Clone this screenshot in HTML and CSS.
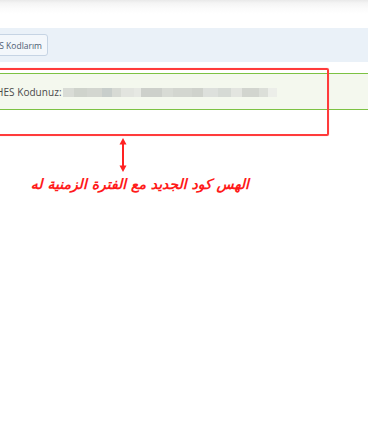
FILE: index.html
```html
<!DOCTYPE html>
<html lang="tr">
<head>
<meta charset="utf-8">
<link rel="stylesheet" href="styles.css">
</head>
<body>
<div class="page">
  <header class="topbar"></header>
  <div class="toolbar">
    <button class="btn">HES Kodlarım</button>
  </div>
  <div class="gap"></div>
  <div class="alert">
    <span class="label">HES Kodunuz:</span>
    <span class="blur">
      <i style="background:#d9dcd6;width:11px"></i><i style="background:#cfd3cc;width:13px"></i><i style="background:#d3d6d0;width:15px"></i><i style="background:#c8cecb;width:10px"></i><i style="background:#d7dad4;width:9px"></i><i style="background:#e2e4df;width:13px"></i><i style="background:#e6e8e3;width:7px"></i><i style="background:#cdd0cb;width:21px"></i><i style="background:#d8dbd5;width:11px"></i><i style="background:#d3d6d0;width:19px"></i><i style="background:#cfd2cc;width:11px"></i><i style="background:#dde0dc;width:15px"></i><i style="background:#d6dad5;width:13px"></i><i style="background:#e3e5e0;width:11px"></i><i style="background:#d2d5cf;width:17px"></i><i style="background:#dcdfd9;width:9px"></i><i style="background:#eceee9;width:9px"></i>
    </span>
  </div>
  <div class="note">
    <p class="note-text">الهس كود الجديد مع الفترة الزمنية له</p>
  </div>
  <div class="highlight"></div>
  <svg class="arrow" width="10" height="36" viewBox="0 0 10 36">
    <path d="M5 3 L5 33" stroke="#f22" stroke-width="2"/>
    <path d="M1.5 7.5 L5 1 L8.5 7.5 Z" fill="#f22"/>
    <path d="M1.5 28.5 L5 35 L8.5 28.5 Z" fill="#f22"/>
  </svg>
</div>
</body>
</html>
```

FILE: styles.css
```css
* { box-sizing: border-box; }
html, body { margin: 0; padding: 0; background: #fff; }
body { width: 368px; height: 445px; overflow: hidden; font-family: "Open Sans", "Noto Sans", sans-serif; }
.page { position: relative; height: 445px; }
.topbar {
  height: 29px;
  background: linear-gradient(#e9e9e9 0px, #f4f4f4 3px, #fbfbfb 8px, #fff 14px);
  border-bottom: 1px solid #f0f0f0;
}
.toolbar {
  height: 34px;
  background: #eaf1f8;
  display: flex;
  align-items: flex-start;
  padding-top: 6px;
  margin-top: -1px;
}
.btn {
  margin-left: -16px;
  height: 22px;
  padding: 0 5px 0 0;
  width: 64px;
  background: #f3f7fb;
  border: 1px solid #c6d4e4;
  border-radius: 3px;
  font-family: "Open Sans", sans-serif;
  font-size: 8.5px;
  color: #4d5d73;
  text-align: right;
  white-space: nowrap;
}
.gap { height: 11px; }
.alert {
  height: 37px;
  background: #f4f8ee;
  border-top: 1px solid #7cc243;
  border-bottom: 1px solid #7cc243;
  display: flex;
  align-items: center;
  margin-left: -4px;
  padding-top: 1px;
}
.label { font-size: 10px; color: #4a4a4a; letter-spacing: 0.05px; }
.blur { display: flex; height: 9px; margin-left: 1px; filter: blur(0.6px); }
.blur i { display: block; height: 9px; }
.note { padding-top: 64px; display: flex; }
.note-text {
  margin: 0 0 0 28px;
  width: 221px;
  direction: rtl;
  font-family: "DejaVu Sans", "Noto Sans", sans-serif;
  font-weight: bold;
  font-style: italic;
  font-size: 14px;
  color: #ff1a1a;
  line-height: 20px;
  white-space: nowrap;
}
.highlight {
  position: absolute;
  left: -10px;
  top: 68px;
  width: 339px;
  height: 68px;
  border: 2.5px solid #ff3b3b;
  border-radius: 2px;
  box-shadow: 0 0 1px rgba(255,0,0,0.4);
}
.arrow { position: absolute; left: 118px; top: 137px; }
```
